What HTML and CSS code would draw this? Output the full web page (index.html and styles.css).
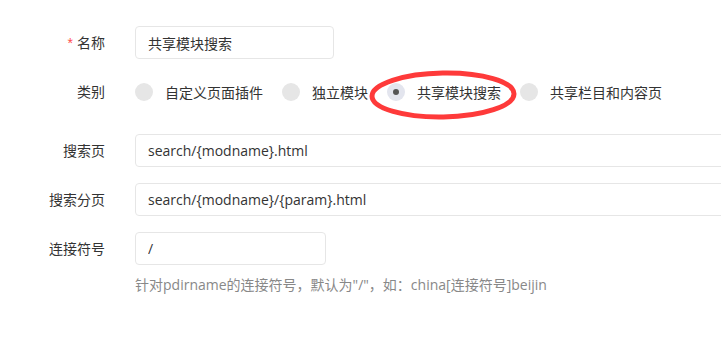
FILE: index.html
```html
<!DOCTYPE html>
<html>
<head>
  <title>模块设置</title>
  <link rel="stylesheet" href="styles.css">
</head>
<body>
  <div class="page">
    <form class="module-form">
      <div class="form-row">
        <label class="form-label"><span class="req">*</span>名称</label>
        <div class="form-field">
          <input type="text" class="text-input short" value="共享模块搜索">
        </div>
      </div>
      <div class="form-row radio-row">
        <label class="form-label">类别</label>
        <div class="form-field radios">
          <label class="radio"><span class="dot"></span>自定义页面插件</label>
          <label class="radio"><span class="dot"></span>独立模块</label>
          <label class="radio checked"><span class="dot"></span>共享模块搜索</label>
          <label class="radio"><span class="dot"></span>共享栏目和内容页</label>
        </div>
      </div>
      <div class="form-row">
        <label class="form-label">搜索页</label>
        <div class="form-field">
          <input type="text" class="text-input wide" value="search/{modname}.html">
        </div>
      </div>
      <div class="form-row">
        <label class="form-label">搜索分页</label>
        <div class="form-field">
          <input type="text" class="text-input wide" value="search/{modname}/{param}.html">
        </div>
      </div>
      <div class="form-row last">
        <label class="form-label">连接符号</label>
        <div class="form-field">
          <input type="text" class="text-input mini" value="/">
          <div class="help">针对pdirname的连接符号，默认为"/"，如：china[连接符号]beijin</div>
        </div>
      </div>
    </form>

    <!-- hand drawn mark over the selected option -->
    <svg class="mark" width="154" height="56" viewBox="0 0 154 56">
      <ellipse cx="76" cy="27" rx="71" ry="22" fill="none" stroke="#fe3a3a" stroke-width="5" transform="rotate(-1 76 27)"/>
    </svg>
  </div>
</body>
</html>
```

FILE: styles.css
```css
body {
  margin: 0;
  font-family: "Open Sans", "Noto Sans CJK SC", sans-serif;
  font-size: 14px;
  color: #333;
  background: #fff;
}

.page {
  position: relative;
  width: 100%;
  padding-top: 26px;
  overflow: hidden;
}

.form-row {
  display: flex;
  align-items: flex-start;
  margin-bottom: 16px;
}

.form-row.radio-row {
  margin-bottom: 26px;
}

.form-label {
  width: 105px;
  flex-shrink: 0;
  text-align: right;
  line-height: 33px;
  height: 33px;
  color: #333;
}

.form-label .req {
  color: #ff4d4f;
  margin-right: 4px;
  font-family: "Liberation Sans", sans-serif;
}

.form-field {
  margin-left: 30px;
  min-width: 0;
  flex: 1;
  overflow: hidden;
}

.text-input {
  box-sizing: border-box;
  height: 33px;
  padding: 0 12px;
  border: 1px solid #e6e6e6;
  border-radius: 4px;
  font-family: "Open Sans", "Noto Sans CJK SC", sans-serif;
  font-size: 14px;
  color: #333;
  outline: none;
}

.text-input.short {
  width: 199px;
}

.text-input.wide {
  width: 640px;
}

.text-input.mini {
  width: 191px;
}

.radios {
  display: flex;
  align-items: center;
  height: 33px;
}

.radio {
  display: flex;
  align-items: center;
  flex-shrink: 0;
  margin-right: 19px;
}

.radio .dot {
  width: 18px;
  height: 18px;
  border-radius: 50%;
  background: #e6e6e6;
  margin-right: 12px;
  position: relative;
}

.radio.checked .dot {
  background: #e3e5ee;
}

.radio.checked .dot::after {
  content: "";
  position: absolute;
  left: 6px;
  top: 6px;
  width: 6px;
  height: 6px;
  border-radius: 50%;
  background: #555;
}

.help {
  margin-top: 10px;
  font-size: 14px;
  line-height: 20px;
  color: #888;
  white-space: nowrap;
}

.mark {
  position: absolute;
  left: 367px;
  top: 68px;
}
```
